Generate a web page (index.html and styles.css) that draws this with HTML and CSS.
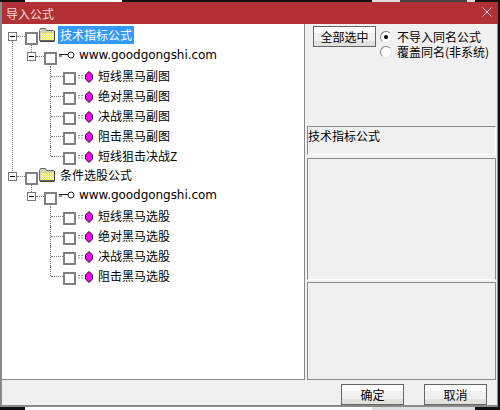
FILE: index.html
```html
<!DOCTYPE html>
<html lang="zh-CN">
<head>
  <meta charset="UTF-8" />
  <title>导入公式</title>
  <link rel="stylesheet" href="styles.css">
</head>
<body>
  <div class="window">
    <header class="titlebar">
      <span class="title">导入公式</span>
      <svg class="close" width="10" height="10" viewBox="0 0 10 10"><path d="M.5.5l9 9M9.500.5l-9 9" stroke="#e8c8c8" fill="none"/></svg>
    </header>
    <div class="content">
      <div class="tree" id="tree"></div>
      <aside class="side">
        <div class="options">
          <button class="btn btn-all">全部选中</button>
          <div class="radios">
            <label class="radio"><i class="dot on"></i>不导入同名公式</label>
            <label class="radio"><i class="dot"></i>覆盖同名(非系统)</label>
          </div>
        </div>
        <div class="panel panel-name">技术指标公式</div>
        <div class="panel panel-a"></div>
        <div class="panel panel-b"></div>
      </aside>
    </div>
    <footer class="actions">
      <button class="btn btn-act">确定</button>
      <button class="btn btn-act">取消</button>
    </footer>
  </div>
  <script>
    const groups = [
      { name: "技术指标公式", selected: true, trunk: true, items: ["短线黑马副图", "绝对黑马副图", "决战黑马副图", "阻击黑马副图", "短线狙击决战Z"] },
      { name: "条件选股公式", items: ["短线黑马选股", "绝对黑马选股", "决战黑马选股", "阻击黑马选股"] }
    ];

    const minus = '<svg class="exp" width="9" height="9" viewBox="0 0 9 9"><rect x=".5" y=".5" width="8" height="8" fill="#fff" stroke="#777"/><path d="M2 4.500h5" stroke="#000"/></svg>';
    const folder = '<svg class="ico folder" width="16" height="14" viewBox="0 0 16 14"><defs><pattern id="dither" width="2" height="2" patternUnits="userSpaceOnUse"><rect width="2" height="2" fill="#fbfbd0"/><rect width="1" height="1" fill="#eeea50"/><rect x="1" y="1" width="1" height="1" fill="#eeea50"/></pattern></defs><path d="M.5 12.500v-10l1-2h5l1 2h7l1 1v9z" fill="#d4d0b0" stroke="#666"/><path d="M2 5h13v7H2z" fill="url(#dither)"/><path d="M1 13.500h14.500M15.500 3v10" stroke="#444"/></svg>';
    const key = '<svg class="ico key" width="16" height="8" viewBox="0 0 16 8"><path d="M0 3.500h9M0 5h3" stroke="#222" fill="none"/><circle cx="12" cy="4" r="3" fill="#fff" stroke="#222"/></svg>';
    const gem = '<svg class="gem" width="15" height="12" viewBox="0 0 15 12"><path d="M0 4.500h5M0 7h5" stroke="#999" fill="none" stroke-dasharray="2 1"/><path d="M11 .5L14.500 4v4L11 11.500 7.500 8V4z" fill="#f0f" stroke="#102"/></svg>';

    function row(cls, html) {
      return `<div class="row ${cls}">${html}</div>`;
    }

    document.getElementById("tree").innerHTML = groups.map(g => {
      const leaves = g.items.map((n, i) =>
        row(i === g.items.length - 1 ? "leaf last" : "leaf", `<span class="dash"></span><i class="check"></i>${gem}<span class="label">${n}</span>`)
      ).join("");
      return row(g.trunk ? "group trunk" : "group", `${minus}<span class="dash"></span><i class="check"></i>${folder}<span class="label ${g.selected ? "selected" : ""}">${g.name}</span>`)
        + row("site", `${minus}<span class="dash"></span><i class="check"></i>${key}<span class="label url">www.goodgongshi.com</span>`)
        + leaves;
    }).join("");
  </script>
</body>
</html>
```

FILE: styles.css
```css
* {
  box-sizing: border-box;
}

/* slivers of the desktop behind the dialog */
body {
  margin: 0;
  height: 410px;
  background-color: #111;
  background-image:
    linear-gradient(90deg, #111 25px, #fff 25px 122px, #111 122px 372px, #ddd 372px 400px, #444 400px 467px, #ddd 467px 475px, #111 475px),
    linear-gradient(90deg, #111 25px, #fff 25px 372px, #ddd 372px 475px, #111 475px);
  background-size: 100% 2px, 100% 3px;
  background-position: top, bottom;
  background-repeat: no-repeat;
  font-family: "Noto Sans CJK SC", "Liberation Sans", sans-serif;
  font-size: 12px;
  color: #000;
  overflow: hidden;
}

.window {
  width: 498px;
  height: 405px;
  position: relative;
  top: 2px;
  display: flex;
  flex-direction: column;
  background-color: #f0f0f0;
  border: solid #8a8a8a;
  border-width: 0 1px 2px 2px;
}

.titlebar {
  height: 22px;
  flex: none;
  display: flex;
  align-items: center;
  justify-content: space-between;
  margin-right: -1px;
  padding: 0 6px 0 4px;
  background-color: #b03035;
  color: #f2dcdc;
}

.close {
  margin-bottom: 2px;
}

.content {
  height: 356px;
  flex: none;
  display: flex;
}

.tree {
  width: 303px;
  flex: none;
  padding: 2px 0 0 6px;
  background-color: #fff;
  border-right: 1px solid #8a8a8a;
  border-bottom: 1px solid #8a8a8a;
}

/* dotted connector lines sit over the rows */
.row {
  position: relative;
  height: 20px;
  display: flex;
  align-items: center;
}

.site {
  padding-left: 19px;
}

.leaf {
  padding-left: 43px;
}

.trunk::before {
  content: "";
  position: absolute;
  left: 4px;
  top: 15px;
  height: 130px;
  border-left: 1px dotted #777;
}

.site::before {
  content: "";
  position: absolute;
  left: 23px;
  top: -1px;
  height: 7px;
  border-left: 1px dotted #777;
}

.leaf::before {
  content: "";
  position: absolute;
  left: 42px;
  top: 0;
  height: 20px;
  border-left: 1px dotted #777;
}

.leaf.last::before {
  height: 10px;
}

.exp {
  flex: none;
  margin-top: 1px;
}

.dash {
  width: 8px;
  flex: none;
  border-top: 1px dotted #777;
}

.leaf .dash {
  width: 12px;
}

.check {
  width: 13px;
  height: 13px;
  flex: none;
  margin-top: 5px;
  background-color: #fff;
  border: 2px solid #808080;
}

.ico {
  flex: none;
}

.folder {
  margin: 0 3px 2px 1px;
}

.key {
  margin: 0 4px 2px 2px;
}

.gem {
  flex: none;
  margin: 2px 5px 0 2px;
}

.label {
  height: 18px;
  line-height: 17px;
  white-space: nowrap;
}

.group .label {
  margin-bottom: 2px;
  padding: 0 2px;
}

.url {
  font-family: "DejaVu Sans", sans-serif;
  letter-spacing: -0.05px;
}

.selected {
  background-color: #3399ff;
  color: #fff;
}

.side {
  flex: 1;
  display: flex;
  flex-direction: column;
  padding: 0 1px 0 2px;
}

.options {
  height: 102px;
  flex: none;
  display: flex;
  align-items: flex-start;
  padding: 2px 0 0 6px;
}

.btn {
  font: inherit;
  color: #000;
  padding: 0;
  background: linear-gradient(#fff 0 30%, #f0f0f0 30% 75%, #e2e2dc 75%);
  border: 1px solid #666;
}

.btn-all {
  width: 63px;
  height: 21px;
}

.radios {
  margin: 3px 0 0 4px;
}

.radio {
  height: 15px;
  display: flex;
  align-items: center;
  gap: 5px;
  line-height: 14px;
  white-space: nowrap;
}

.dot {
  width: 12px;
  height: 12px;
  flex: none;
  display: flex;
  align-items: center;
  justify-content: center;
  background-color: #fff;
  border: 1px solid;
  border-color: #808080 #e8e8e8 #e8e8e8 #808080;
  border-radius: 50%;
}

.dot.on::after {
  content: "";
  width: 4px;
  height: 4px;
  background-color: #000;
  border-radius: 50%;
}

.panel {
  flex: none;
  border: 1px solid #8a8a8a;
  border-right-color: #fff;
  border-bottom-color: #fff;
}

.panel-name {
  height: 29px;
  margin-bottom: 3px;
  line-height: 17px;
}

.panel-a {
  height: 122px;
  margin-bottom: 2px;
  border-right-color: #8a8a8a;
}

.panel-b {
  height: 98px;
  border-right-color: #8a8a8a;
  border-bottom-color: #8a8a8a;
}

.actions {
  flex: 1;
  display: flex;
  justify-content: flex-end;
  gap: 20px;
  padding: 4px 10px 0 0;
}

.btn-act {
  width: 63px;
  height: 21px;
}
```
